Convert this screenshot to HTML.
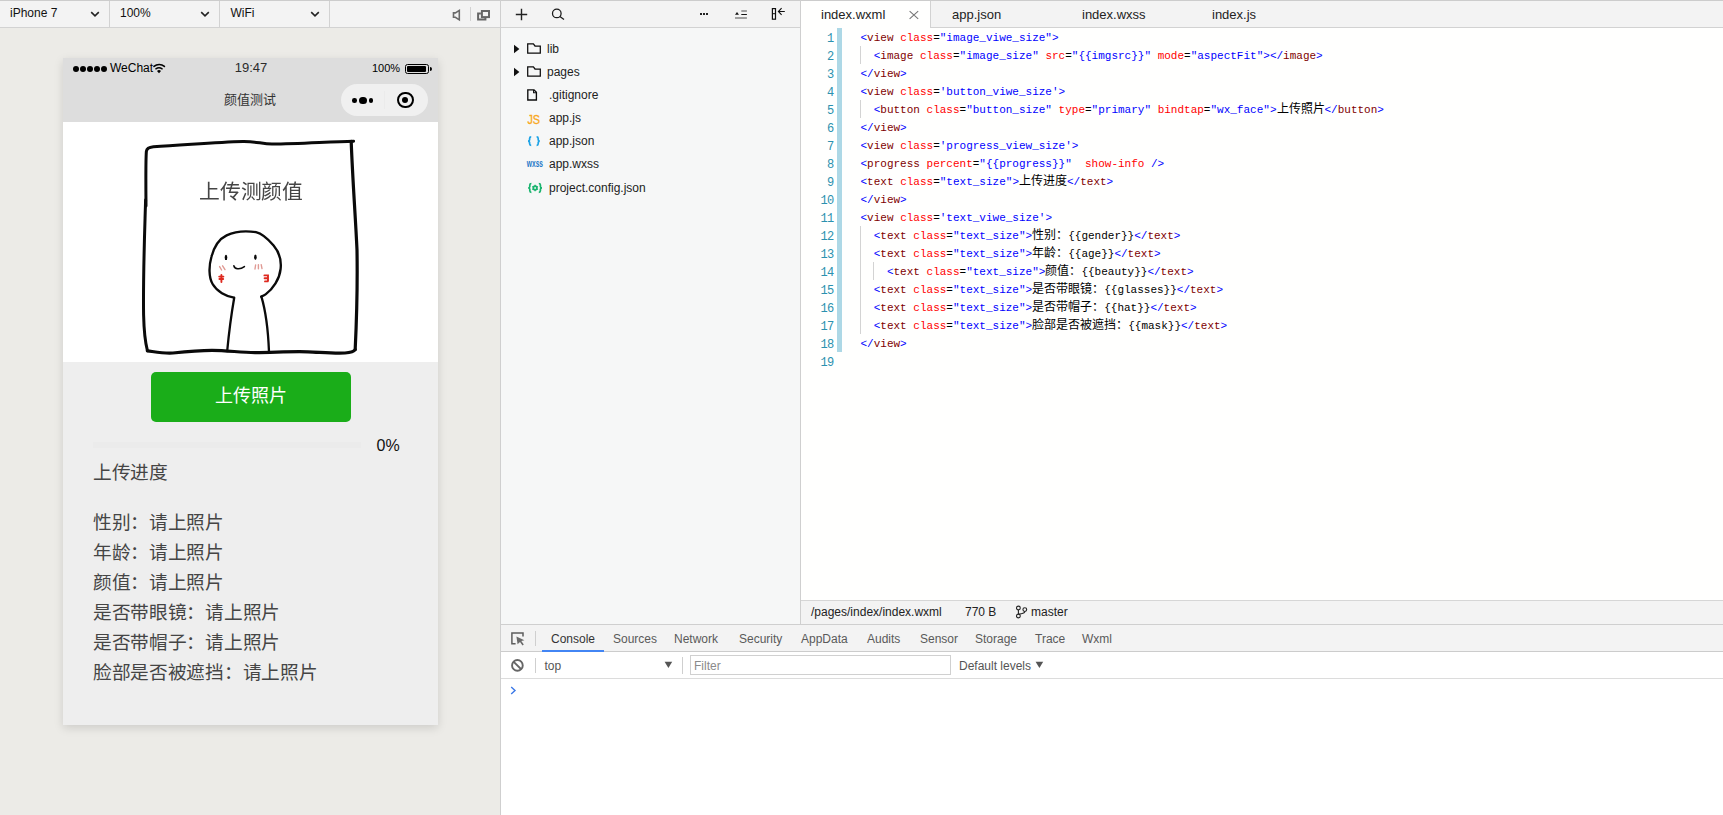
<!DOCTYPE html>
<html lang="zh-CN">
<head>
<meta charset="utf-8">
<title>WeChat DevTools</title>
<style>
*{margin:0;padding:0;box-sizing:border-box;}
i{display:inline-block;width:1em;text-align:center;font-style:normal;white-space:nowrap;}
html,body{width:1723px;height:815px;overflow:hidden;background:#fff;}
body{position:relative;font-family:"Liberation Sans",sans-serif;font-size:12px;color:#000;}
.abs{position:absolute;}
.t{position:absolute;white-space:nowrap;line-height:1;}
/* simulator */
#sim{left:0;top:0;width:500px;height:815px;background:#ecebe7;}
#simbar{left:0;top:0;width:500px;height:28px;background:#f3f3f3;border-top:1px solid #cccccc;border-bottom:1px solid #d2d2d2;}
.vdiv{position:absolute;width:1px;background:#d2d2d2;}
/* phone */
#phone{left:63px;top:58px;width:375px;height:667px;background:#eeeeee;box-shadow:0 3px 9px rgba(0,0,0,0.13);}
#phead{left:0;top:0;width:375px;height:64px;background:#dddddd;}
#pimg{left:0;top:64px;width:375px;height:240px;background:#fff;}
#btn{left:88px;top:314px;width:200px;height:50px;background:#1aad19;border-radius:5px;color:#fff;font-size:18px;text-align:center;line-height:48px;}
.pt{position:absolute;left:30px;margin-top:1px;font-size:18.7px;color:#454545;white-space:nowrap;line-height:30px;height:30px;}
/* tree */
#tree{left:500px;top:0;width:300px;height:625px;background:#f6f7f7;border-left:1px solid #cfcfcf;}
#treebar{left:501px;top:0;width:299px;height:28px;background:#f3f3f3;border-top:1px solid #cccccc;border-bottom:1px solid #d2d2d2;}
.tl{position:absolute;font-size:12px;color:#222;white-space:nowrap;line-height:14px;}
/* editor */
#ed{left:800px;top:0;width:923px;height:625px;background:#fffffe;border-left:1px solid #cfcfcf;}
#tabs{left:801px;top:0;width:922px;height:28px;background:#f3f3f3;border-top:1px solid #cccccc;border-bottom:1px solid #d2d2d2;}
#tab1{left:801px;top:1px;width:130px;height:27px;background:#fffffe;border-right:1px solid #d2d2d2;}
.tabt{position:absolute;top:8px;font-size:13px;color:#222;white-space:nowrap;line-height:14px;}
#code{left:801px;top:28px;width:922px;}
.ln{position:absolute;left:0;top:1px;width:32.6px;text-align:right;color:#2b91af;font-size:12px;letter-spacing:-0.6px;}
.cl{position:absolute;left:0;height:18px;line-height:20px;width:922px;font-family:"Liberation Mono",monospace;font-size:11px;white-space:pre;color:#000;}
.cl .c{position:absolute;left:59.5px;top:0;}
.d{color:#0000ff}.g{color:#800000}.a{color:#ff0000}.v{color:#0000ff}
.cj{font-size:12px;font-family:"Liberation Sans",sans-serif;line-height:0;}
.ig{position:absolute;width:1px;background:#d3d3d3;}
#gbar{left:36px;top:0;width:5px;height:324px;background:#add8e6;}
/* status */
#stat{left:801px;top:600px;width:922px;height:25px;background:#f3f3f3;border-top:1px solid #d6d6d6;}
/* devtools */
#dt{left:500px;top:624px;width:1223px;height:191px;background:#fff;border-left:1px solid #cfcfcf;border-top:1px solid #cfcfcf;}
#dttabs{left:501px;top:625px;width:1222px;height:27px;background:#f3f3f3;border-bottom:1px solid #cccccc;}
#dtfil{left:501px;top:652px;width:1222px;height:27px;background:#ffffff;border-bottom:1px solid #dcdcdc;}
.dtt{position:absolute;top:632px;font-size:12px;color:#5a5a5a;white-space:nowrap;line-height:14px;}
</style>
</head>
<body>
<!-- SIMULATOR -->
<div id="sim" class="abs"></div>
<div id="simbar" class="abs"></div>
<div class="t" style="left:10px;top:7px;font-size:12px;color:#111">iPhone 7</div>
<div class="t" style="left:120px;top:7px;font-size:12px;color:#111">100%</div>
<div class="t" style="left:230.5px;top:7px;font-size:12px;color:#111">WiFi</div>
<div class="vdiv" style="left:109px;top:1px;height:26px"></div>
<div class="vdiv" style="left:219px;top:1px;height:26px"></div>
<div class="vdiv" style="left:329px;top:1px;height:26px"></div>
<div class="vdiv" style="left:470px;top:7px;height:14px"></div>


<svg class="abs" style="left:90px;top:9px" width="10" height="10" viewBox="0 0 10 10"><path d="M1.2 3.2 L5 6.8 L8.8 3.2" fill="none" stroke="#222" stroke-width="1.6"/></svg>
<svg class="abs" style="left:200px;top:9px" width="10" height="10" viewBox="0 0 10 10"><path d="M1.2 3.2 L5 6.8 L8.8 3.2" fill="none" stroke="#222" stroke-width="1.6"/></svg>
<svg class="abs" style="left:310px;top:9px" width="10" height="10" viewBox="0 0 10 10"><path d="M1.2 3.2 L5 6.8 L8.8 3.2" fill="none" stroke="#222" stroke-width="1.6"/></svg>
<svg class="abs" style="left:451px;top:8px" width="12" height="14" viewBox="451 8 12 14"><path d="M453.5 12.9 H455.4 L459.3 10.4 V19.8 L455.4 17.3 H453.5 Z" fill="none" stroke="#6a6a6a" stroke-width="1.6" stroke-linejoin="miter"/></svg>
<svg class="abs" style="left:476px;top:9px" width="15" height="13" viewBox="476 9 15 13"><rect x="481.9" y="11" width="7.1" height="6.1" fill="none" stroke="#666" stroke-width="2"/><path d="M480.9 13.5 H478.1 V19.6 H485.4 V18.1" fill="none" stroke="#666" stroke-width="2"/></svg>

<!-- PHONE -->
<div id="phone" class="abs">

  <div id="phead" class="abs">
    <div class="abs" style="left:10px;top:7.5px;width:6px;height:6px;border-radius:50%;background:#000"></div>
    <div class="abs" style="left:17px;top:7.5px;width:6px;height:6px;border-radius:50%;background:#000"></div>
    <div class="abs" style="left:24px;top:7.5px;width:6px;height:6px;border-radius:50%;background:#000"></div>
    <div class="abs" style="left:31px;top:7.5px;width:6px;height:6px;border-radius:50%;background:#000"></div>
    <div class="abs" style="left:38px;top:7.5px;width:6px;height:6px;border-radius:50%;background:#000"></div>
    <div class="t" style="left:47px;top:4px;font-size:12px;color:#000">WeChat</div>
    <svg class="abs" style="left:88px;top:4px" width="16" height="13" viewBox="151 62 16 13"><path d="M154 66.4 A8.1 8.1 0 0 1 164.4 66.4" fill="none" stroke="#000" stroke-width="1.6" stroke-linecap="round"/><path d="M155.9 68.8 A5.3 5.3 0 0 1 162.1 68.8" fill="none" stroke="#000" stroke-width="1.5" stroke-linecap="round"/><path d="M157 70.9 A2.9 2.9 0 0 1 161 70.9 L159 73.2 Z" fill="#000"/></svg>
    <div class="t" style="left:171px;top:3px;font-size:13px;color:#2b2b2b;width:34px;text-align:center">19:47</div>
    <div class="t" style="left:309px;top:5px;font-size:11px;color:#000">100%</div>
    <div class="abs" style="left:342px;top:6px;width:24px;height:10px;border:1px solid #000;border-radius:2.5px"></div>
    <div class="abs" style="left:344px;top:8px;width:19.4px;height:6px;background:#000;border-radius:1px"></div>
    <div class="abs" style="left:366.9px;top:8.8px;width:2px;height:4.4px;background:#000;border-radius:0 2px 2px 0"></div>
    <div class="t" style="left:134px;top:35px;font-size:13px;color:#333;width:105px;text-align:center"><i>颜</i><i>值</i><i>测</i><i>试</i></div>
    <div class="abs" style="left:278px;top:26px;width:87px;height:32px;border-radius:16px;background:#f0f0f0"></div>
    <div class="abs" style="left:321px;top:33px;width:1px;height:17.5px;background:#ebebeb"></div>
    <div class="abs" style="left:289.4px;top:40.3px;width:4.6px;height:4.6px;border-radius:50%;background:#000"></div>
    <div class="abs" style="left:296.2px;top:38.9px;width:7.4px;height:7.4px;border-radius:50%;background:#000"></div>
    <div class="abs" style="left:305.9px;top:40.3px;width:4.6px;height:4.6px;border-radius:50%;background:#000"></div>
    <div class="abs" style="left:334px;top:33.6px;width:16.8px;height:16.8px;border-radius:50%;border:2.2px solid #000"></div>
    <div class="abs" style="left:339.35px;top:38.95px;width:6.1px;height:6.1px;border-radius:50%;background:#000"></div>
  </div>

  <div id="pimg" class="abs">
    <svg class="abs" style="left:0;top:0;filter:blur(0.32px)" width="375" height="240" viewBox="63 122 375 240"><g>
      <g fill="none" stroke="#0a0a0a" stroke-linecap="round" stroke-linejoin="round">
        <path stroke-width="3" d="M146 206 C145.8 180 145.6 160 146.4 151.2 C146.8 148.2 149.4 147.2 153.4 146.8 C185 145.2 215 142 243 141.4 C256 141.2 262 144 272 144 C300 143.8 330 141.6 353.6 141.2"/>
        <path stroke-width="3.2" d="M351.2 141.4 C352.6 180 355.4 215 357 250 C357.6 285 356.6 320 355.2 349.4"/>
        <path stroke-width="3" d="M145.6 200 C144.6 235 143 275 143.6 315 C144 332 145.4 343 147.4 350.6"/>
        <path stroke-width="3.2" d="M147.4 350.8 C156 352 165 353.8 173 353 C186 351.6 198 350.4 212 350.4 C228 350.4 240 352.6 255 352.6 C275 352.4 292 351.2 308 351.8 C322 352.4 334 353.6 345 353 C350 352.6 353.6 352 355.2 349.6"/>
        <path stroke-width="2.35" d="M234 297.6 C226 296.4 217 291.6 212.6 284 C208.6 277 208.8 266 211.4 257 C214 247 219 239 226.6 235.4 C236 231 247 230.8 256 232.2 C262 233.6 268 239 273.6 245.6 C279.6 252.6 281.6 260 280.6 269 C279.6 279 273 289 265.6 294.4 C264 295.6 262.4 296.2 261.2 296.6"/>
        <path stroke-width="2.3" d="M234.2 297.8 C231.4 314 229 332 227.2 351"/>
        <path stroke-width="2.3" d="M261.4 296.6 C266 312 268.2 332 269 351.6"/>
        <path stroke-width="1.6" d="M233.9 265.8 C234.6 269 239.6 270.2 244.4 266.6"/>
      </g>
      <ellipse cx="226" cy="257.4" rx="1.3" ry="2.7" fill="#0a0a0a"/>
      <ellipse cx="255.4" cy="257.2" rx="1.3" ry="2.7" fill="#0a0a0a"/>
      <text x="251" y="199.3" text-anchor="middle" font-family="'Liberation Sans',sans-serif" font-size="20.8" fill="#454545" textLength="104" lengthAdjust="spacing">上传测颜值</text>
      <g fill="none" stroke="#e09a94" stroke-width="1.4" stroke-linecap="round">
        <path d="M219.6 266.6 L221.6 270 M222.6 265.8 L225 269.6"/>
        <path d="M255.6 265 L255 269 M258.4 264.6 L258.4 268.8 M261.2 264.6 L262 268.6"/>
      </g>
      <g fill="none" stroke="#de2a20" stroke-width="1.9" stroke-linecap="round">
        <path d="M219.2 276.6 H223.4 M219.4 279 H223.2 M221.4 275 V282"/>
        <path d="M264.4 275.4 H268 V281 M264.6 278.2 H268 M265 281.4 H267.6"/>
      </g>
    </g></svg>
  </div>
  <div id="btn" class="abs"><i>上</i><i>传</i><i>照</i><i>片</i></div>
  <div class="abs" style="left:30px;top:384px;width:268px;height:6px;background:#ebebeb"></div>
  <div class="t" style="left:313.5px;top:380px;font-size:16px;color:#111">0%</div>
  <div class="pt" style="top:399px"><i>上</i><i>传</i><i>进</i><i>度</i></div>
  <div class="pt" style="top:449px"><i>性</i><i>别</i><i>：</i><i>请</i><i>上</i><i>照</i><i>片</i></div>
  <div class="pt" style="top:479px"><i>年</i><i>龄</i><i>：</i><i>请</i><i>上</i><i>照</i><i>片</i></div>
  <div class="pt" style="top:509px"><i>颜</i><i>值</i><i>：</i><i>请</i><i>上</i><i>照</i><i>片</i></div>
  <div class="pt" style="top:539px"><i>是</i><i>否</i><i>带</i><i>眼</i><i>镜</i><i>：</i><i>请</i><i>上</i><i>照</i><i>片</i></div>
  <div class="pt" style="top:569px"><i>是</i><i>否</i><i>带</i><i>帽</i><i>子</i><i>：</i><i>请</i><i>上</i><i>照</i><i>片</i></div>
  <div class="pt" style="top:599px"><i>脸</i><i>部</i><i>是</i><i>否</i><i>被</i><i>遮</i><i>挡</i><i>：</i><i>请</i><i>上</i><i>照</i><i>片</i></div>
</div>

<!-- TREE -->
<div id="tree" class="abs"></div>
<div id="treebar" class="abs"></div>


<svg class="abs" style="left:514px;top:7px" width="15" height="15" viewBox="0 0 15 15"><path d="M7.5 1.8 V13.2 M1.8 7.5 H13.2" stroke="#222" stroke-width="1.4" fill="none"/></svg>
<svg class="abs" style="left:550px;top:6px" width="16" height="16" viewBox="550 6 16 16"><circle cx="556.8" cy="13.4" r="4.3" fill="none" stroke="#1a1a1a" stroke-width="1.25"/><path d="M559.9 16.6 L564 19.6" stroke="#1a1a1a" stroke-width="1.3"/></svg>
<div class="abs" style="left:699.5px;top:13px;width:2.2px;height:2.2px;background:#222"></div>
<div class="abs" style="left:702.9px;top:13px;width:2.2px;height:2.2px;background:#222"></div>
<div class="abs" style="left:706.3px;top:13px;width:2.2px;height:2.2px;background:#222"></div>
<svg class="abs" style="left:734px;top:8px" width="14" height="12" viewBox="734 8 14 12"><path d="M741.3 11 H746.9 M735 18 H746.9" stroke="#858585" stroke-width="1.7" fill="none"/><path d="M741.3 14.5 H746.9" stroke="#111" stroke-width="1" fill="none"/><path d="M735 14.7 L737 12 L739 14.7 Z" fill="#111"/></svg>
<svg class="abs" style="left:771px;top:7px" width="15" height="14" viewBox="771 7 15 14"><rect x="772.4" y="8.6" width="3.1" height="10.6" fill="none" stroke="#111" stroke-width="1.2"/><path d="M772.4 13.7 H775.5" stroke="#111" stroke-width="1"/><path d="M778.5 11.5 H784.8 M781.6 8.2 L778.4 11.5 L781.6 14.8" stroke="#111" stroke-width="1.1" fill="none"/></svg>

<svg class="abs" style="left:513px;top:44px" width="8" height="10" viewBox="0 0 8 10"><path d="M1 0.8 L6.4 5 L1 9.2 Z" fill="#111"/></svg>
<svg class="abs" style="left:513px;top:67px" width="8" height="10" viewBox="0 0 8 10"><path d="M1 0.8 L6.4 5 L1 9.2 Z" fill="#111"/></svg>
<svg class="abs" style="left:526px;top:42px" width="16" height="13" viewBox="526 42 16 13"><path d="M527.7 53.2 V43.9 H533.4 L535 46 H540.3 V53.2 Z" fill="none" stroke="#0c0c0c" stroke-width="1.25" stroke-linejoin="miter"/></svg>
<svg class="abs" style="left:526px;top:65px" width="16" height="13" viewBox="526 42 16 13"><path d="M527.7 53.2 V43.9 H533.4 L535 46 H540.3 V53.2 Z" fill="none" stroke="#0c0c0c" stroke-width="1.25" stroke-linejoin="miter"/></svg>
<svg class="abs" style="left:526px;top:88px" width="13" height="14" viewBox="526 88 13 14"><path d="M527.8 89.8 H534 L536.4 92.2 V100 H527.8 Z" fill="none" stroke="#0c0c0c" stroke-width="1.35" stroke-linejoin="miter"/><path d="M533.6 90 V92.8 H536.2" fill="none" stroke="#0c0c0c" stroke-width="1.1"/></svg>
<div class="tl" style="left:547px;top:42px">lib</div>
<div class="tl" style="left:547px;top:65px">pages</div>
<div class="tl" style="left:549px;top:88px">.gitignore</div>
<div class="tl" style="left:549px;top:111px">app.js</div>
<div class="tl" style="left:549px;top:134px">app.json</div>
<div class="tl" style="left:549px;top:157px">app.wxss</div>
<div class="tl" style="left:549px;top:181px">project.config.json</div>
<svg class="abs" style="left:526px;top:111px" width="18" height="15" viewBox="526 111 18 15"><text x="527.4" y="123.8" font-family="'Liberation Sans',sans-serif" font-size="13.6" fill="#f8a820" stroke="#f8a820" stroke-width="0.35" textLength="12.6" lengthAdjust="spacingAndGlyphs">JS</text></svg>
<svg class="abs" style="left:526px;top:134px" width="16" height="14" viewBox="526 134 16 14"><path d="M531.2 136.9 C529.6 136.9 529.6 137.4 529.6 138.41 V139.76 C529.6 140.68 529.12 141.1 528 141.1 C529.12 141.1 529.6 141.52 529.6 142.44 V143.79 C529.6 144.8 529.6 145.3 531.2 145.3 M536.6 136.9 C538.2 136.9 538.2 137.4 538.2 138.41 V139.76 C538.2 140.68 538.68 141.1 539.8 141.1 C538.68 141.1 538.2 141.52 538.2 142.44 V143.79 C538.2 144.8 538.2 145.3 536.6 145.3" fill="none" stroke="#1ea3e6" stroke-width="1.7"/></svg>
<svg class="abs" style="left:526px;top:157px" width="19" height="13" viewBox="526 157 19 13"><text x="526.8" y="167.2" font-family="'Liberation Sans',sans-serif" font-size="10.4" font-weight="bold" fill="#1e78c8" textLength="16.2" lengthAdjust="spacingAndGlyphs">wxss</text></svg>
<svg class="abs" style="left:526px;top:181px" width="18" height="14" viewBox="526 181 18 14"><path d="M531.4 183.5 C529.8 183.5 529.8 184.03 529.8 185.1 V186.53 C529.8 187.5 529.32 187.95 528.2 187.95 C529.32 187.95 529.8 188.39 529.8 189.37 V190.8 C529.8 191.87 529.8 192.4 531.4 192.4 M538.8 183.5 C540.4 183.5 540.4 184.03 540.4 185.1 V186.53 C540.4 187.5 540.88 187.95 542 187.95 C540.88 187.95 540.4 188.39 540.4 189.37 V190.8 C540.4 191.87 540.4 192.4 538.8 192.4" fill="none" stroke="#19b46e" stroke-width="1.7"/><circle cx="535.1" cy="188" r="1.9" fill="none" stroke="#19b46e" stroke-width="1.5"/><path d="M535.1 184.8 V191.2 M532.3 186.4 L537.9 189.6 M532.3 189.6 L537.9 186.4" stroke="#19b46e" stroke-width="1.2"/><circle cx="535.1" cy="188" r="0.9" fill="#f6f7f7"/></svg>

<!-- EDITOR -->
<div id="ed" class="abs"></div>
<div id="tabs" class="abs"></div>
<div id="tab1" class="abs"></div>

<div class="tabt" style="left:821px">index.wxml</div>
<div class="tabt" style="left:952px">app.json</div>
<div class="tabt" style="left:1082px">index.wxss</div>
<div class="tabt" style="left:1212px">index.js</div>
<svg class="abs" style="left:908px;top:10px" width="12" height="10" viewBox="0 0 12 10"><path d="M1.6 1.2 L10.2 8.8 M10.2 1.2 L1.6 8.8" stroke="#777" stroke-width="1.1" fill="none"/></svg>
<div id="code" class="abs">
<div id="gbar" class="abs"></div>
<div class="ig" style="left:59px;top:18px;height:18px"></div>
<div class="ig" style="left:59px;top:72px;height:18px"></div>
<div class="ig" style="left:59px;top:198px;height:108px"></div>
<div class="ig" style="left:72px;top:234px;height:18px"></div>
<div class="cl" style="top:0px"><span class="ln">1</span><span class="c"><span class="d">&lt;</span><span class="g">view</span> <span class="a">class</span>=<span class="v">"image_viwe_size"</span><span class="d">&gt;</span></span></div>
<div class="cl" style="top:18px"><span class="ln">2</span><span class="c">  <span class="d">&lt;</span><span class="g">image</span> <span class="a">class</span>=<span class="v">"image_size"</span> <span class="a">src</span>=<span class="v">"{{imgsrc}}"</span> <span class="a">mode</span>=<span class="v">"aspectFit"</span><span class="d">&gt;</span><span class="d">&lt;/</span><span class="g">image</span><span class="d">&gt;</span></span></div>
<div class="cl" style="top:36px"><span class="ln">3</span><span class="c"><span class="d">&lt;/</span><span class="g">view</span><span class="d">&gt;</span></span></div>
<div class="cl" style="top:54px"><span class="ln">4</span><span class="c"><span class="d">&lt;</span><span class="g">view</span> <span class="a">class</span>=<span class="v">'button_viwe_size'</span><span class="d">&gt;</span></span></div>
<div class="cl" style="top:72px"><span class="ln">5</span><span class="c">  <span class="d">&lt;</span><span class="g">button</span> <span class="a">class</span>=<span class="v">"button_size"</span> <span class="a">type</span>=<span class="v">"primary"</span> <span class="a">bindtap</span>=<span class="v">"wx_face"</span><span class="d">&gt;</span><span class="cj"><i>上</i><i>传</i><i>照</i><i>片</i></span><span class="d">&lt;/</span><span class="g">button</span><span class="d">&gt;</span></span></div>
<div class="cl" style="top:90px"><span class="ln">6</span><span class="c"><span class="d">&lt;/</span><span class="g">view</span><span class="d">&gt;</span></span></div>
<div class="cl" style="top:108px"><span class="ln">7</span><span class="c"><span class="d">&lt;</span><span class="g">view</span> <span class="a">class</span>=<span class="v">'progress_view_size'</span><span class="d">&gt;</span></span></div>
<div class="cl" style="top:126px"><span class="ln">8</span><span class="c"><span class="d">&lt;</span><span class="g">progress</span> <span class="a">percent</span>=<span class="v">"{{progress}}"</span>  <span class="a">show-info</span> <span class="d">/&gt;</span></span></div>
<div class="cl" style="top:144px"><span class="ln">9</span><span class="c"><span class="d">&lt;</span><span class="g">text</span> <span class="a">class</span>=<span class="v">"text_size"</span><span class="d">&gt;</span><span class="cj"><i>上</i><i>传</i><i>进</i><i>度</i></span><span class="d">&lt;/</span><span class="g">text</span><span class="d">&gt;</span></span></div>
<div class="cl" style="top:162px"><span class="ln">10</span><span class="c"><span class="d">&lt;/</span><span class="g">view</span><span class="d">&gt;</span></span></div>
<div class="cl" style="top:180px"><span class="ln">11</span><span class="c"><span class="d">&lt;</span><span class="g">view</span> <span class="a">class</span>=<span class="v">'text_viwe_size'</span><span class="d">&gt;</span></span></div>
<div class="cl" style="top:198px"><span class="ln">12</span><span class="c">  <span class="d">&lt;</span><span class="g">text</span> <span class="a">class</span>=<span class="v">"text_size"</span><span class="d">&gt;</span><span class="cj"><i>性</i><i>别</i><i>：</i></span>{{gender}}<span class="d">&lt;/</span><span class="g">text</span><span class="d">&gt;</span></span></div>
<div class="cl" style="top:216px"><span class="ln">13</span><span class="c">  <span class="d">&lt;</span><span class="g">text</span> <span class="a">class</span>=<span class="v">"text_size"</span><span class="d">&gt;</span><span class="cj"><i>年</i><i>龄</i><i>：</i></span>{{age}}<span class="d">&lt;/</span><span class="g">text</span><span class="d">&gt;</span></span></div>
<div class="cl" style="top:234px"><span class="ln">14</span><span class="c">    <span class="d">&lt;</span><span class="g">text</span> <span class="a">class</span>=<span class="v">"text_size"</span><span class="d">&gt;</span><span class="cj"><i>颜</i><i>值</i><i>：</i></span>{{beauty}}<span class="d">&lt;/</span><span class="g">text</span><span class="d">&gt;</span></span></div>
<div class="cl" style="top:252px"><span class="ln">15</span><span class="c">  <span class="d">&lt;</span><span class="g">text</span> <span class="a">class</span>=<span class="v">"text_size"</span><span class="d">&gt;</span><span class="cj"><i>是</i><i>否</i><i>带</i><i>眼</i><i>镜</i><i>：</i></span>{{glasses}}<span class="d">&lt;/</span><span class="g">text</span><span class="d">&gt;</span></span></div>
<div class="cl" style="top:270px"><span class="ln">16</span><span class="c">  <span class="d">&lt;</span><span class="g">text</span> <span class="a">class</span>=<span class="v">"text_size"</span><span class="d">&gt;</span><span class="cj"><i>是</i><i>否</i><i>带</i><i>帽</i><i>子</i><i>：</i></span>{{hat}}<span class="d">&lt;/</span><span class="g">text</span><span class="d">&gt;</span></span></div>
<div class="cl" style="top:288px"><span class="ln">17</span><span class="c">  <span class="d">&lt;</span><span class="g">text</span> <span class="a">class</span>=<span class="v">"text_size"</span><span class="d">&gt;</span><span class="cj"><i>脸</i><i>部</i><i>是</i><i>否</i><i>被</i><i>遮</i><i>挡</i><i>：</i></span>{{mask}}<span class="d">&lt;/</span><span class="g">text</span><span class="d">&gt;</span></span></div>
<div class="cl" style="top:306px"><span class="ln">18</span><span class="c"><span class="d">&lt;/</span><span class="g">view</span><span class="d">&gt;</span></span></div>
<div class="cl" style="top:324px"><span class="ln">19</span><span class="c"></span></div>
</div>
<div id="stat" class="abs"></div>


<div class="t" style="left:811px;top:606px;font-size:12px;color:#222">/pages/index/index.wxml</div>
<div class="t" style="left:965px;top:606px;font-size:12px;color:#222">770 B</div>
<svg class="abs" style="left:1015px;top:605px" width="13" height="14" viewBox="0 0 13 14"><circle cx="3.4" cy="3" r="1.9" fill="none" stroke="#222" stroke-width="1.1"/><circle cx="3.4" cy="11" r="1.9" fill="none" stroke="#222" stroke-width="1.1"/><circle cx="9.8" cy="4.6" r="1.9" fill="none" stroke="#222" stroke-width="1.1"/><path d="M3.4 5 V9 M9.8 6.6 C9.8 9 6 8.4 3.6 9.4" fill="none" stroke="#222" stroke-width="1.1"/></svg>
<div class="t" style="left:1031px;top:606px;font-size:12px;color:#222">master</div>

<!-- DEVTOOLS -->
<div id="dt" class="abs"></div>
<div id="dttabs" class="abs"></div>
<div id="dtfil" class="abs"></div>

<svg class="abs" style="left:510px;top:631px" width="17" height="16" viewBox="510 631 17 16"><path d="M523 636.6 V633 H511.9 V643.8 H515.6" fill="none" stroke="#5e5e5e" stroke-width="1.5"/><path d="M516.4 636.4 L524.4 640.2 L521.3 641.1 L523.8 644.6 L522.5 645.5 L520 642 L517.6 644.2 Z" fill="#6a6a6a"/></svg>
<div class="vdiv" style="left:535px;top:631px;height:15px;background:#cfcfcf"></div>
<div class="dtt" style="left:551px;color:#333">Console</div>
<div class="dtt" style="left:613px">Sources</div>
<div class="dtt" style="left:674px">Network</div>
<div class="dtt" style="left:739px">Security</div>
<div class="dtt" style="left:801px">AppData</div>
<div class="dtt" style="left:867px">Audits</div>
<div class="dtt" style="left:920px">Sensor</div>
<div class="dtt" style="left:975px">Storage</div>
<div class="dtt" style="left:1035px">Trace</div>
<div class="dtt" style="left:1082px">Wxml</div>
<div class="abs" style="left:542px;top:650px;width:62px;height:2px;background:#4285f4"></div>

<svg class="abs" style="left:510px;top:658px" width="15" height="15" viewBox="510 658 15 15"><circle cx="517.4" cy="665.4" r="5.35" fill="none" stroke="#666" stroke-width="1.9"/><path d="M513.5 661.6 L521.2 669.2" stroke="#666" stroke-width="1.9"/></svg>
<div class="vdiv" style="left:535px;top:658px;height:15px;background:#cfcfcf"></div>
<div class="t" style="left:544.5px;top:660px;font-size:12px;color:#555">top</div>
<svg class="abs" style="left:664px;top:661px" width="9" height="8" viewBox="0 0 9 8"><path d="M0.6 0.8 H8.2 L4.4 7 Z" fill="#555"/></svg>
<div class="vdiv" style="left:682px;top:657px;height:17px;background:#cfcfcf"></div>
<div class="abs" style="left:690px;top:655px;width:261px;height:20px;background:#fff;border:1px solid #d0d0d0"></div>
<div class="t" style="left:694px;top:660px;font-size:12px;color:#8a8a8a">Filter</div>
<div class="t" style="left:959px;top:660px;font-size:12px;color:#555">Default levels</div>
<svg class="abs" style="left:1035px;top:661px" width="9" height="8" viewBox="0 0 9 8"><path d="M0.6 0.8 H8.2 L4.4 7 Z" fill="#555"/></svg>
<svg class="abs" style="left:510px;top:686px" width="7" height="9" viewBox="0 0 7 9"><path d="M1.2 1 L5 4.5 L1.2 8" fill="none" stroke="#3b78e7" stroke-width="1.4"/></svg>

</body>
</html>
